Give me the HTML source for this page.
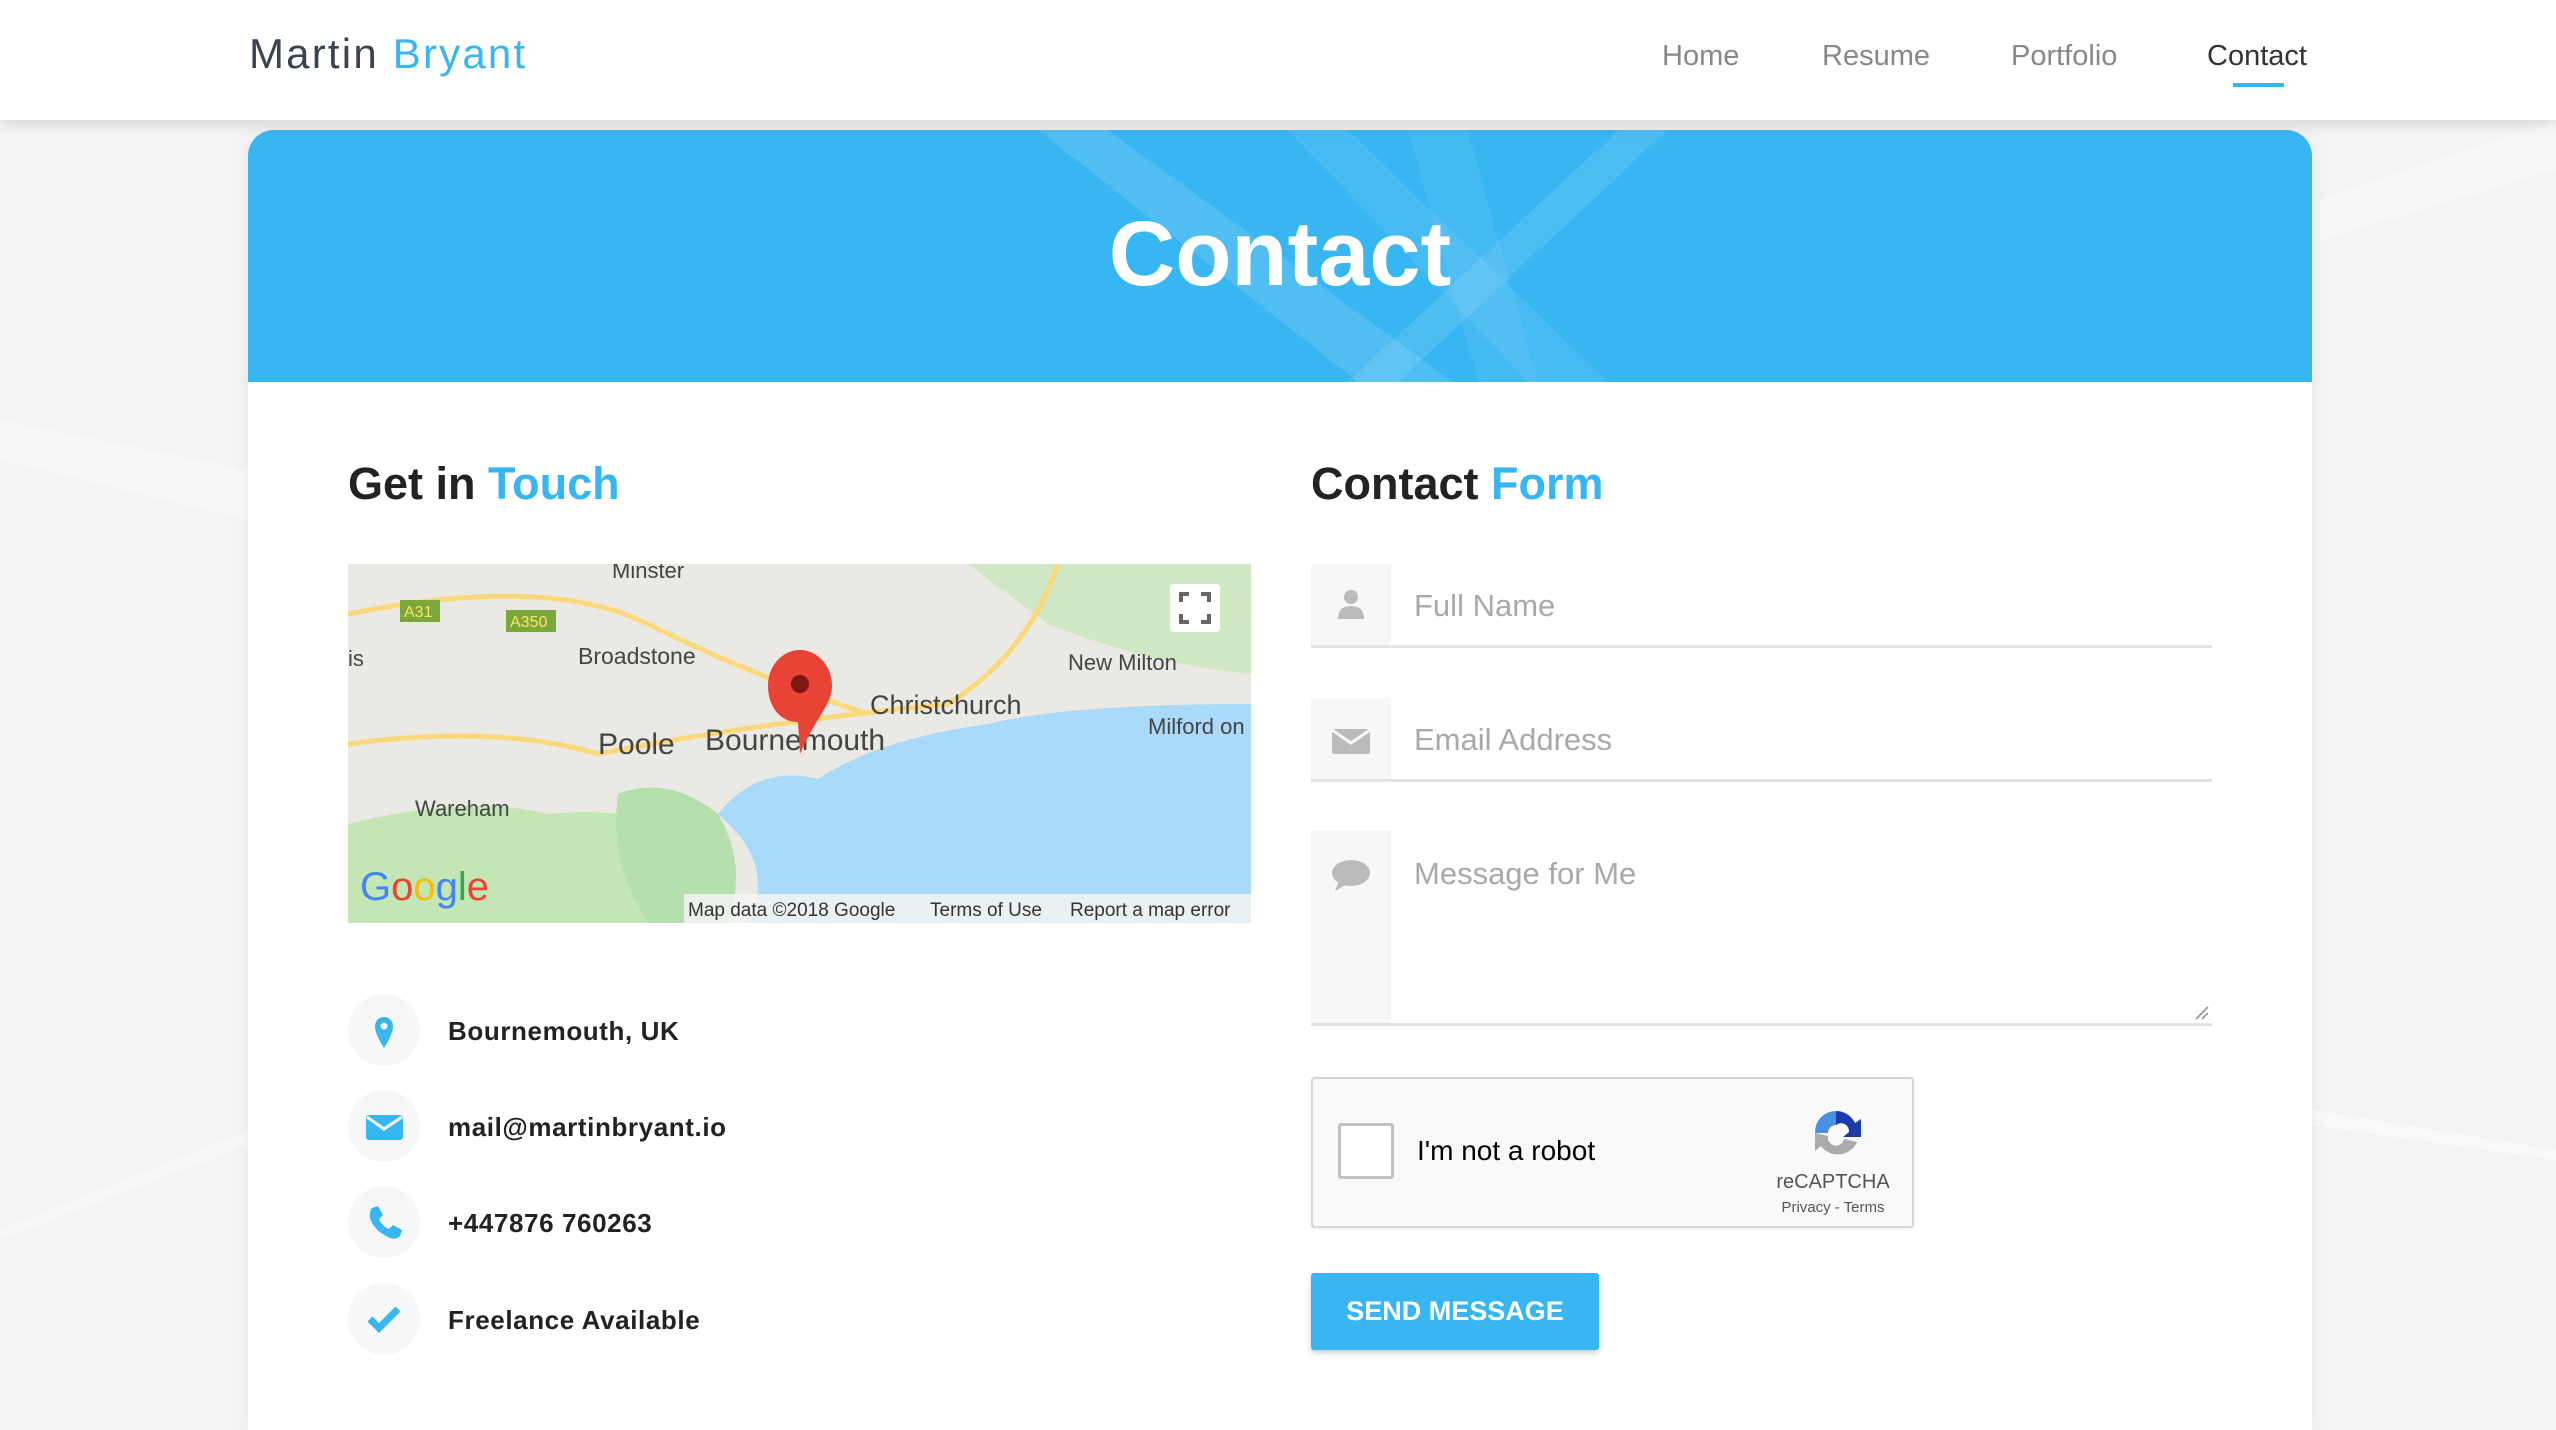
<!DOCTYPE html>
<html><head><meta charset="utf-8"><style>
*{box-sizing:border-box;margin:0;padding:0}
body{width:2556px;height:1406px;overflow:hidden;background:#f4f4f4;font-family:"Liberation Sans",sans-serif;position:relative}
.hdr{position:absolute;left:0;top:0;width:2556px;height:120px;background:#fff;box-shadow:0 4px 14px rgba(0,0,0,.12);z-index:3}
.logo{position:absolute;left:249px;top:30px;font-size:42px;color:#3b4250;letter-spacing:2.2px}
.logo span{color:#38b6f2}
.nav{position:absolute;top:40px;font-size:29px;color:#888}
.card{position:absolute;left:248px;top:130px;width:2064px;height:1300px;background:#fff;border-radius:26px 26px 0 0;overflow:hidden;box-shadow:0 0 20px rgba(0,0,0,.06)}
.hero{position:absolute;left:0;top:0;width:2064px;height:252px;background:#38b6f2;overflow:hidden}
.hero h1{position:absolute;left:0;width:100%;top:72px;text-align:center;color:#fff;font-size:92px;font-weight:bold}
h2{position:absolute;font-size:45px;font-weight:bold;color:#222}
h2 span{color:#38b6f2}
.map{position:absolute;left:348px;top:564px;width:903px;height:359px;overflow:hidden;background:#ebe8e1}
.ic{position:absolute;left:348px;width:72px;height:72px;border-radius:50%;background:#f6f7f8}
.it{position:absolute;left:448px;font-size:26px;font-weight:bold;color:#222;letter-spacing:0.6px}
.fld{position:absolute;left:1311px;width:901px;border-bottom:3px solid #e3e3e3}
.fi{position:absolute;left:0;top:0;width:80px;height:100%;background:#f7f7f7}
.ph{position:absolute;left:103px;font-size:31px;color:#a9a9a9}
</style></head><body>
<svg style="position:absolute;left:0;top:0" width="2556" height="1406"><polygon points="2320,200 2556,120 2556,170 2320,240" fill="#f8f8f8"/><polygon points="0,420 248,470 248,520 0,460" fill="#f8f8f8"/><polygon points="2312,1110 2556,1150 2556,1160 2312,1125" fill="#f9f9f9"/><polygon points="0,1230 248,1130 248,1145 0,1240" fill="#f8f8f8"/></svg>
<div class="hdr">
<div class="logo">Martin <span>Bryant</span></div>
<div class="nav" style="left:1662px">Home</div>
<div class="nav" style="left:1822px">Resume</div>
<div class="nav" style="left:2011px">Portfolio</div>
<div class="nav" style="left:2207px;color:#333">Contact</div>
<div style="position:absolute;left:2233px;top:83px;width:51px;height:4px;background:#38b6f2"></div>
</div>
<div class="card">
<div class="hero">
<svg width="2064" height="252" style="position:absolute;left:0;top:0"><polygon points="790,0 860,0 1205,252 1110,252" fill="rgba(255,255,255,.12)"/><polygon points="1040,0 1100,0 1360,252 1280,252" fill="rgba(255,255,255,.08)"/><polygon points="1370,0 1420,0 1150,252 1100,252" fill="rgba(255,255,255,.1)"/><polygon points="1160,0 1220,0 1290,252 1230,252" fill="rgba(255,255,255,.06)"/></svg>
<h1>Contact</h1>
</div>
</div>
<h2 style="left:348px;top:458px">Get in <span>Touch</span></h2>
<h2 style="left:1311px;top:458px">Contact <span>Form</span></h2>
<div class="map"><svg width="903" height="359">
<rect width="903" height="359" fill="#ebe9e3"/>
<path d="M0,260 Q120,230 200,250 Q300,240 350,280 L380,359 L0,359Z" fill="#c4e6b4"/>
<path d="M620,0 L903,0 L903,110 Q800,100 700,60Z" fill="#cfe8c3"/>
<path d="M370,250 Q410,200 470,215 Q530,175 640,160 Q720,140 903,140 L903,359 L400,359 Q430,300 370,250Z" fill="#aadaf9"/>
<path d="M270,230 Q320,210 370,250 Q400,300 380,359 L300,359 Q260,300 270,230Z" fill="#b6dfae"/>
<path d="M0,50 Q200,10 300,60 Q400,110 520,150" stroke="#fbd97a" stroke-width="5" fill="none"/>
<path d="M0,180 Q150,160 250,190 Q400,160 600,140 Q680,90 710,0" stroke="#fbd97a" stroke-width="5" fill="none"/>
<rect x="52" y="36" width="40" height="22" fill="#7aa83a"/><text x="56" y="53" font-size="16" fill="#ffe36b" font-family="Liberation Sans">A31</text>
<rect x="158" y="46" width="50" height="22" fill="#7aa83a"/><text x="162" y="63" font-size="16" fill="#ffe36b" font-family="Liberation Sans">A350</text>
<g font-family="Liberation Sans" fill="#444"><text x="230" y="100" font-size="23">Broadstone</text><text x="264" y="14" font-size="22">Minster</text><text x="0" y="102" font-size="22">is</text><text x="720" y="106" font-size="22">New Milton</text><text x="522" y="150" font-size="27">Christchurch</text><text x="250" y="190" font-size="30">Poole</text><text x="357" y="186" font-size="30">Bournemouth</text><text x="800" y="170" font-size="22">Milford on</text><text x="67" y="252" font-size="22">Wareham</text></g>
<path d="M450,158 C430,158 420,140 420,122 C420,100 436,86 452,86 C468,86 484,100 484,122 C484,140 470,150 452,190Z" fill="#e94335"/><circle cx="452" cy="120" r="9" fill="#7e1612"/>
<rect x="822" y="20" width="50" height="48" rx="4" fill="#fff"/><path d="M833,38v-8h8M853,30h8v8M861,50v8h-8M841,58h-8v-8" stroke="#666" stroke-width="4" fill="none"/>
<text x="12" y="336" font-size="40" font-family="Liberation Sans" fill="#4285f4">G<tspan fill="#ea4335">o</tspan><tspan fill="#fbbc05">o</tspan>g<tspan fill="#34a853">l</tspan><tspan fill="#ea4335">e</tspan></text>
<rect x="336" y="330" width="567" height="29" fill="rgba(245,245,245,.85)"/>
<text x="340" y="352" font-size="19" font-family="Liberation Sans" fill="#333">Map data ©2018 Google</text><text x="582" y="352" font-size="19" font-family="Liberation Sans" fill="#333">Terms of Use</text><text x="722" y="352" font-size="19" font-family="Liberation Sans" fill="#333">Report a map error</text>
</svg></div>
<div class="ic" style="top:994px"><svg width="72" height="72"><path d="M36,54 C30,44 27,38 27,32 a9,9 0 0 1 18,0 C45,38 42,44 36,54Z" fill="#38b6f2"/><circle cx="36" cy="32" r="3.5" fill="#f6f7f8"/></svg></div>
<div class="it" style="top:1016px">Bournemouth, UK</div>
<div class="ic" style="top:1090px"><svg width="72" height="72"><rect x="18" y="25" width="37" height="25" rx="3" fill="#38b6f2"/><path d="M19,27 L36,39 L54,27" stroke="#f6f7f8" stroke-width="3" fill="none"/></svg></div>
<div class="it" style="top:1112px">mail@martinbryant.io</div>
<div class="ic" style="top:1186px"><svg width="72" height="72"><path d="M24,22 l6,-2 l5,9 l-4,4 q3,7 10,10 l4,-4 l9,5 l-2,6 q-4,4 -10,2 q-16,-7 -20,-20 q-1,-6 2,-10z" fill="#38b6f2"/></svg></div>
<div class="it" style="top:1208px">+447876 760263</div>
<div class="ic" style="top:1283px"><svg width="72" height="72"><path d="M22,36 l9,9 l19,-19" stroke="#38b6f2" stroke-width="7" fill="none"/></svg></div>
<div class="it" style="top:1305px">Freelance Available</div>
<div class="fld" style="top:564px;height:84px"><div class="fi"><svg width="80" height="80"><circle cx="40" cy="33" r="7" fill="#bbb"/><path d="M27,55 q0,-13 13,-13 q13,0 13,13z" fill="#bbb"/></svg></div><div class="ph" style="top:24px">Full Name</div></div>
<div class="fld" style="top:698px;height:84px"><div class="fi"><svg width="80" height="80"><rect x="21" y="31" width="38" height="25" rx="2" fill="#bbb"/><path d="M21,32 L40,45 L59,32" stroke="#f7f7f7" stroke-width="3" fill="none"/></svg></div><div class="ph" style="top:24px">Email Address</div></div>
<div class="fld" style="top:831px;height:195px"><div class="fi"><svg width="80" height="80"><ellipse cx="40" cy="42" rx="19" ry="13" fill="#bbb"/><path d="M28,50 l-4,10 l12,-7z" fill="#bbb"/></svg></div><div class="ph" style="top:25px">Message for Me</div><svg style="position:absolute;right:2px;bottom:2px" width="16" height="16"><path d="M2,14 L14,2 M8,14 L14,8" stroke="#888" stroke-width="1.5"/></svg></div>
<div style="position:absolute;left:1311px;top:1077px;width:603px;height:151px;background:#f9f9f9;border:2px solid #d6d6d6;border-radius:4px;box-shadow:0 1px 3px rgba(0,0,0,.08)">
<div style="position:absolute;left:25px;top:44px;width:56px;height:56px;background:#fff;border:3px solid #c1c1c1;border-radius:3px"></div>
<div style="position:absolute;left:104px;top:56px;font-size:28px;color:#000">I'm not a robot</div>
<svg style="position:absolute;left:490px;top:20px" width="66" height="66"><path d="M12,34 a21,21 0 0 1 21,-22 l0,14 a8,8 0 0 0 -8,8z" fill="#4a90e2"/><path d="M33,12 a21,21 0 0 1 19,12 l6,-4 l0,18 l-18,0 l6,-5 a8,8 0 0 0 -13,-7z" fill="#1c3aa9"/><path d="M12,34 l-0,18 l6,-5 a21,21 0 0 0 36,-4 l-13,-3 a8,8 0 0 1 -16,-3z" fill="#aaa"/></svg>
<div style="position:absolute;left:455px;top:92px;font-size:20px;color:#555;width:130px;text-align:center">reCAPTCHA</div>
<div style="position:absolute;left:455px;top:120px;font-size:15px;color:#555;width:130px;text-align:center">Privacy - Terms</div>
</div>
<div style="position:absolute;left:1311px;top:1273px;width:288px;height:77px;background:#38b6f2;border-radius:3px;box-shadow:0 3px 6px rgba(0,0,0,.2);color:#fff;font-weight:bold;font-size:27px;text-align:center;line-height:77px">SEND MESSAGE</div>
</body></html>
